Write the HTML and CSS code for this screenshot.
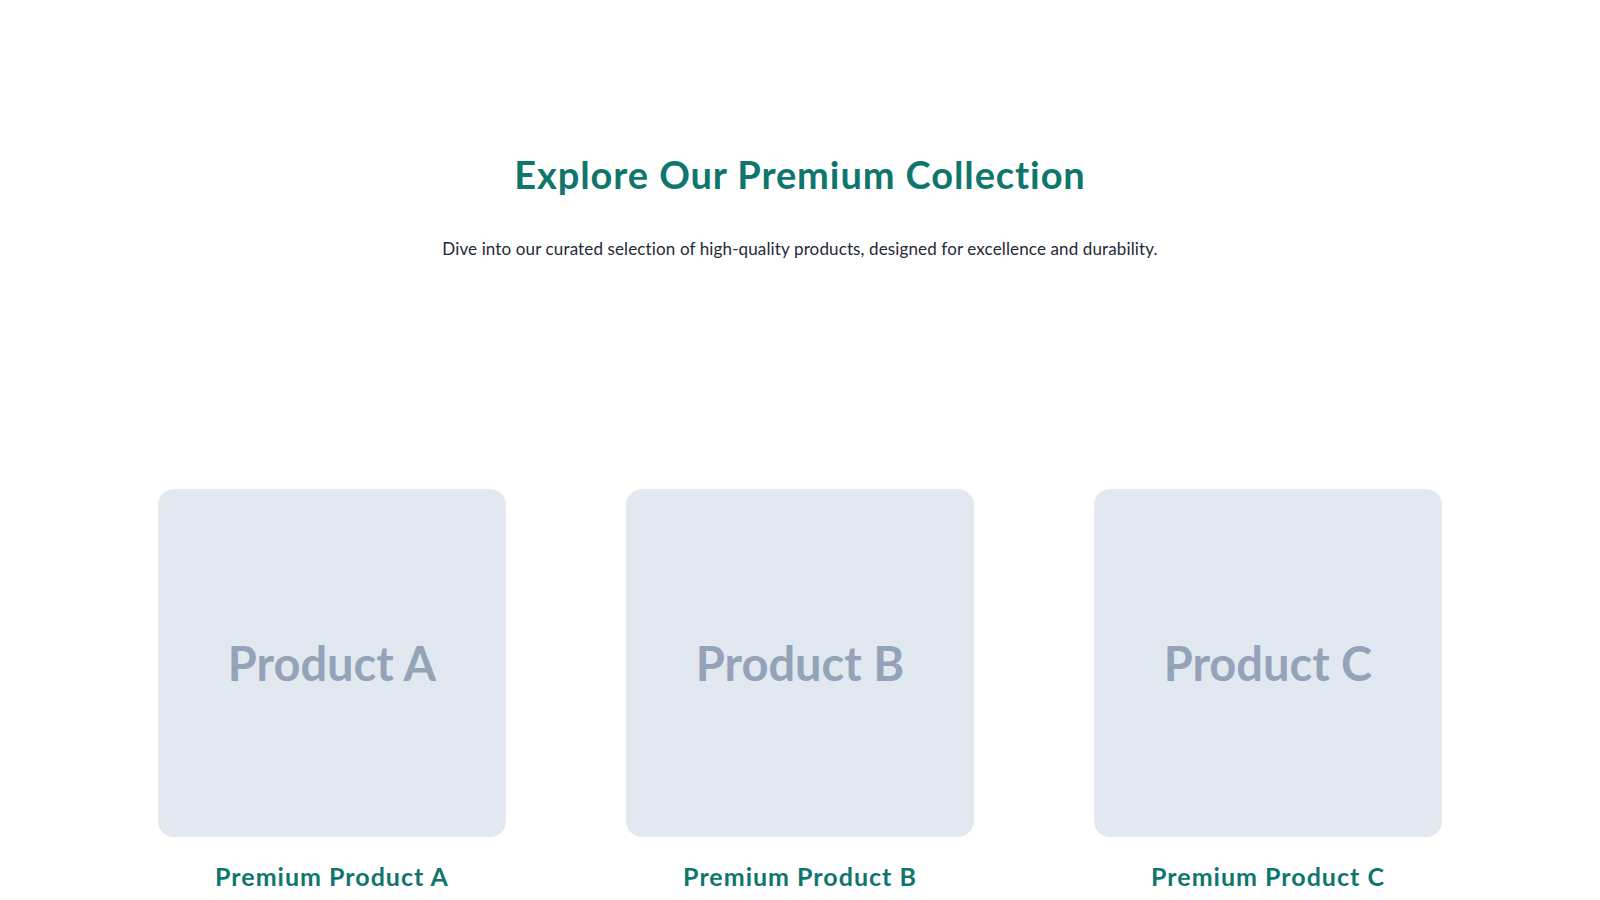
FILE: index.html
```html
<!DOCTYPE html>
<html lang="en">
<head>
<meta charset="utf-8">
<title>Explore Our Premium Collection</title>
<link rel="stylesheet" href="styles.css">
</head>
<body>
<main class="page">
  <header class="hero">
    <h1 class="hero-title">Explore Our Premium Collection</h1>
    <p class="hero-sub">Dive into our curated selection of high-quality products, designed for excellence and durability.</p>
  </header>
  <section class="grid">
    <article class="card">
      <div class="thumb"><span class="thumb-label">Product A</span></div>
      <h2 class="card-title">Premium Product A</h2>
    </article>
    <article class="card">
      <div class="thumb"><span class="thumb-label">Product B</span></div>
      <h2 class="card-title">Premium Product B</h2>
    </article>
    <article class="card">
      <div class="thumb"><span class="thumb-label">Product C</span></div>
      <h2 class="card-title">Premium Product C</h2>
    </article>
  </section>
</main>
</body>
</html>
```

FILE: styles.css
```css
* { box-sizing: border-box; }
html, body { margin: 0; padding: 0; background: #ffffff; }
body {
  font-family: Lato, "Noto Sans", sans-serif;
  color: #1f2937;
  overflow: hidden;
  height: 900px;
}
.page { width: 1600px; }
.hero {
  padding-top: 150px;
  text-align: center;
}
.hero-title {
  margin: 0;
  font-size: 38px;
  line-height: 48px;
  font-weight: 700;
  letter-spacing: 0.9px;
  color: #0f766e;
}
.hero-sub {
  margin: 39px 0 0;
  font-size: 17px;
  line-height: 24px;
  letter-spacing: 0.13px;
  color: #1f2937;
}
.grid {
  margin: 228px auto 0;
  width: 1284px;
  display: grid;
  grid-template-columns: repeat(3, 348px);
  column-gap: 120px;
}
.card { display: flex; flex-direction: column; align-items: center; }
.thumb {
  width: 348px;
  height: 348px;
  border-radius: 16px;
  background: #e2e8f0;
  display: flex;
  align-items: center;
  justify-content: center;
}
.thumb-label {
  font-family: Lato, sans-serif;
  font-size: 47px;
  font-weight: 700;
  color: #94a3b8;
}
.card-title {
  margin: 24px 0 0;
  font-size: 25px;
  line-height: 30px;
  font-weight: 700;
  letter-spacing: 1px;
  color: #0f766e;
}
```
